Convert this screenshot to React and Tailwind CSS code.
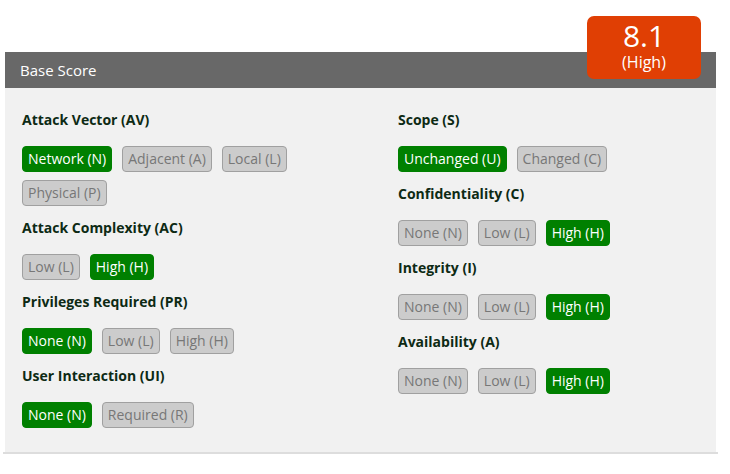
const metrics = {
  left: [
    {
      title: "Attack Vector (AV)",
      options: ["Network (N)", "Adjacent (A)", "Local (L)", "Physical (P)"],
      selected: 0,
    },
    { title: "Attack Complexity (AC)", options: ["Low (L)", "High (H)"], selected: 1 },
    {
      title: "Privileges Required (PR)",
      options: ["None (N)", "Low (L)", "High (H)"],
      selected: 0,
    },
    { title: "User Interaction (UI)", options: ["None (N)", "Required (R)"], selected: 0 },
  ],
  right: [
    { title: "Scope (S)", options: ["Unchanged (U)", "Changed (C)"], selected: 0 },
    {
      title: "Confidentiality (C)",
      options: ["None (N)", "Low (L)", "High (H)"],
      selected: 2,
    },
    { title: "Integrity (I)", options: ["None (N)", "Low (L)", "High (H)"], selected: 2 },
    { title: "Availability (A)", options: ["None (N)", "Low (L)", "High (H)"], selected: 2 },
  ],
};

const Metric = ({ title, options, selected }) => (
  <div className="mb-[12px]">
    <h3 className="text-[14px] font-bold text-[#0d2a14] leading-[20px] h-[20px] mt-[2px]">
      {title}
    </h3>
    <div className="flex flex-wrap gap-x-[10px] gap-y-[8px] w-[300px] mt-[16px]">
      {options.map((opt, i) => (
        <button
          key={opt}
          className={
            i === selected
              ? "h-[26px] px-[5px] rounded-[4px] border border-[#008000] bg-[#008000] text-white text-[14px] leading-[24px]"
              : "h-[26px] px-[5px] rounded-[4px] border border-[#a0a0a0] bg-[#cccccc] text-[#777777] text-[14px] leading-[24px]"
          }
        >
          {opt}
        </button>
      ))}
    </div>
  </div>
);

export default function App() {
  return (
    <div
      className="w-[730px] h-[474px] bg-white pt-[52px] pl-[5px]"
      style={{ fontFamily: '"Open Sans", "Noto Sans", sans-serif' }}
    >
      <div className="relative w-[711px]">
        <div className="h-[36px] bg-[#686868] text-white text-[15px] flex items-center pl-[15px]">
          Base Score
        </div>
        <div className="absolute right-[15px] top-[-36px] w-[114px] h-[63px] rounded-[7px] bg-[#e03f04] text-white flex flex-col items-center pt-[3px]">
          <span className="text-[30px] leading-[34px]">8.1</span>
          <span className="text-[16px] leading-[18px]">(High)</span>
        </div>
        <div className="bg-[#f1f1f1] h-[364px] flex pl-[17px] pt-[20px]">
          <div className="w-[376px]">
            {metrics.left.map((m) => (
              <Metric key={m.title} {...m} />
            ))}
          </div>
          <div>
            {metrics.right.map((m) => (
              <Metric key={m.title} {...m} />
            ))}
          </div>
        </div>
      </div>
      <div className="ml-[-2px] w-[715px] h-[2px] bg-[#dddddd]" />
    </div>
  );
}
